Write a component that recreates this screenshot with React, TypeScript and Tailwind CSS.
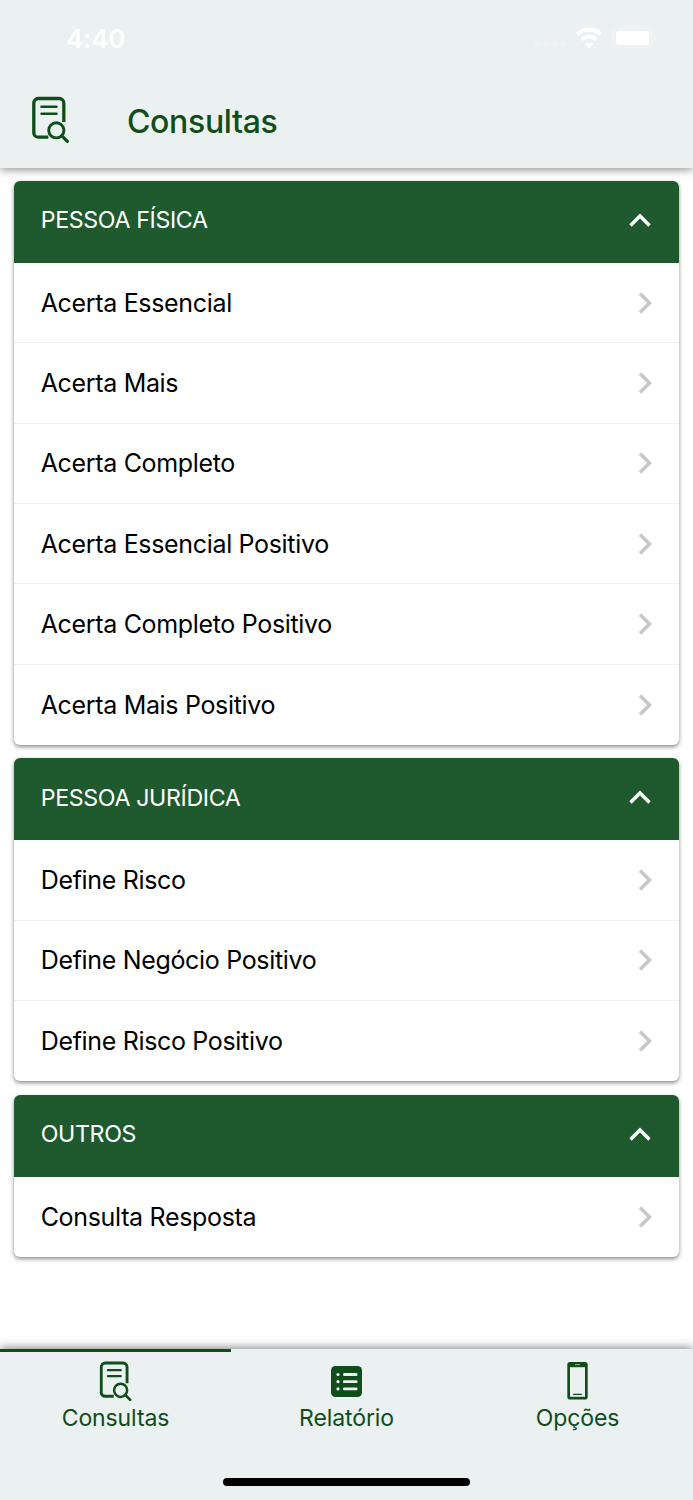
import { useState } from 'react'

interface Section {
  title: string
  items: string[]
}

const sections: Section[] = [
  {
    title: 'PESSOA FÍSICA',
    items: [
      'Acerta Essencial',
      'Acerta Mais',
      'Acerta Completo',
      'Acerta Essencial Positivo',
      'Acerta Completo Positivo',
      'Acerta Mais Positivo'
    ]
  },
  {
    title: 'PESSOA JURÍDICA',
    items: ['Define Risco', 'Define Negócio Positivo', 'Define Risco Positivo']
  },
  {
    title: 'OUTROS',
    items: ['Consulta Resposta']
  }
]

function SearchDocIcon({ className }: { className?: string }) {
  return (
    <svg viewBox="0 0 40 50" fill="none" stroke="currentColor" className={className}>
      <path d="M33.8 27V8a4.5 4.5 0 0 0-4.5-4.5H8.3A4.5 4.5 0 0 0 3.8 8v29.7a4.5 4.5 0 0 0 4.5 4.5h10" strokeWidth="3.3" />
      <path d="M11.5 11.8h15M11.5 18.8h15" strokeWidth="2.5" strokeLinecap="round" />
      <circle cx="26.3" cy="35.3" r="7.6" strokeWidth="2.9" />
      <path d="M31.8 40.8l5.6 5.6" strokeWidth="3.2" strokeLinecap="round" />
    </svg>
  )
}

function ListIcon() {
  return (
    <svg viewBox="0 0 31 31" className="w-[31px] h-[31px]">
      <rect width="31" height="31" rx="4.5" fill="currentColor" />
      <g fill="#ebf0f0">
        <circle cx="7" cy="8.5" r="1.6" />
        <circle cx="7" cy="15.7" r="1.6" />
        <circle cx="7" cy="22.9" r="1.6" />
        <rect x="12" y="7.1" width="14.5" height="2.8" rx="1.2" />
        <rect x="12" y="14.3" width="14.5" height="2.8" rx="1.2" />
        <rect x="12" y="21.5" width="14.5" height="2.8" rx="1.2" />
      </g>
    </svg>
  )
}

function PhoneIcon() {
  return (
    <svg viewBox="0 0 21 38" className="w-[21px] h-[38px]">
      <rect x="0.3" width="20.4" height="37.6" rx="2.8" fill="currentColor" />
      <rect x="3" y="5.2" width="15" height="29.6" fill="#ebf0f0" />
      <path d="M8.5 2.6h4" stroke="#ebf0f0" strokeWidth="0.9" strokeLinecap="round" opacity="0.7" />
      <path d="M6.2 32.4h8.6" stroke="currentColor" strokeWidth="1.3" />
    </svg>
  )
}

function StatusBar() {
  return (
    <div className="flex h-[76px] items-center justify-between pl-[66px] pr-[37px] text-white">
      <span className="pt-px text-[26px] font-semibold leading-none tracking-[-0.2px]">4:40</span>
      <svg viewBox="0 0 124 24" className="h-[24px] w-[124px]" fill="currentColor">
        <g opacity="0.25">
          <circle cx="5.3" cy="18.5" r="3" />
          <circle cx="14" cy="18.5" r="3" />
          <circle cx="22.6" cy="18.5" r="3" />
          <circle cx="31.3" cy="18.5" r="3" />
        </g>
        <g fill="none" stroke="currentColor">
          <path d="M45 8.2a18 18 0 0 1 24 0" strokeWidth="4.2" />
          <path d="M49.7 13.5a11 11 0 0 1 14.6 0" strokeWidth="3.8" />
        </g>
        <path d="M57 22.3l-4.3-4.2a6.4 6.4 0 0 1 8.6 0z" />
        <rect x="81.5" y="2" width="38.5" height="19.5" rx="5.5" fill="none" stroke="currentColor" strokeWidth="1.5" opacity="0.35" />
        <rect x="84" y="4.7" width="33.2" height="14.2" rx="3" />
        <path d="M122.2 8.5a4 4 0 0 1 0 6.6z" opacity="0.4" />
      </svg>
    </div>
  )
}

export default function App() {
  const [closed, setClosed] = useState<string[]>([])
  const [tab, setTab] = useState('Consultas')

  const toggle = (title: string) => {
    setClosed(closed.includes(title) ? closed.filter(t => t !== title) : [...closed, title])
  }

  const tabs = [
    { name: 'Consultas', icon: <SearchDocIcon className="w-[34.4px] h-[43px]" /> },
    { name: 'Relatório', icon: <ListIcon /> },
    { name: 'Opções', icon: <PhoneIcon /> }
  ]

  return (
    <div className="flex h-[1500px] w-[693px] flex-col overflow-hidden bg-white font-['Inter',sans-serif]">
      <header className="z-10 h-[168px] shrink-0 bg-[#ebf0f0] shadow-[0_1px_9px_rgba(0,0,0,0.5)]">
        <StatusBar />
        <div className="flex items-start pl-[30px] pt-[19px] text-[#0f4d1a]">
          <SearchDocIcon className="w-[40px] h-[50px]" />
          <h1 className="ml-[57px] pt-[2px] text-[32px] font-medium leading-[50px] tracking-[-0.35px]">Consultas</h1>
        </div>
      </header>

      <main className="flex flex-1 flex-col gap-[13.5px] px-[13.7px] pt-[13px]">
        {sections.map(section => (
          <section key={section.title} className="rounded-[6px] bg-white shadow-[0_2px_4px_rgba(0,0,0,0.45)]">
            <button
              onClick={() => toggle(section.title)}
              className="flex h-[82px] w-full items-center justify-between rounded-t-[6px] bg-[#1f5a2f] pb-[4px] pl-[27px] pr-[28px] text-white"
            >
              <span className="pt-[2px] text-[23.2px] leading-none tracking-[-0.35px]">{section.title}</span>
              <svg viewBox="0 0 22 14" className="h-[14px] w-[22px]" fill="none" stroke="currentColor" strokeWidth="3.4">
                <path d="M1.5 12.5L11 3l9.5 9.5" />
              </svg>
            </button>
            {!closed.includes(section.title) && (
              <ul>
                {section.items.map(item => (
                  <li
                    key={item}
                    className="flex h-[80.33px] items-center justify-between border-b border-[#f0f0f0] pl-[27px] pr-[27px] text-black last:border-b-0"
                  >
                    <span className="pt-px text-[25px] leading-none tracking-[-0.33px]">{item}</span>
                    <svg viewBox="0 0 14 22" className="h-[22px] w-[14px]" fill="none" stroke="#c8c8c8" strokeWidth="3.6">
                      <path d="M2 1.5l9.5 9.5L2 20.5" />
                    </svg>
                  </li>
                ))}
              </ul>
            )}
          </section>
        ))}
      </main>

      <footer className="z-10 flex h-[151px] shrink-0 flex-col bg-[#ebf0f0] shadow-[0_-1px_9px_rgba(0,0,0,0.5)]">
        <nav className="flex text-[#0f4d1a]">
          {tabs.map(t => (
            <button
              key={t.name}
              onClick={() => setTab(t.name)}
              className={`flex h-[100px] flex-1 flex-col items-center border-t-[3.5px] pt-[7px] ${tab === t.name ? 'border-[#0f4d1a]' : 'border-transparent'}`}
            >
              <span className="flex h-[44px] items-center">{t.icon}</span>
              <span className="mt-[1px] text-[23px] leading-[28px] tracking-[-0.1px]">{t.name}</span>
            </button>
          ))}
        </nav>
        <div className="ml-[222.5px] mt-[29px] h-[8px] w-[247.5px] rounded-full bg-black" />
      </footer>
    </div>
  )
}
